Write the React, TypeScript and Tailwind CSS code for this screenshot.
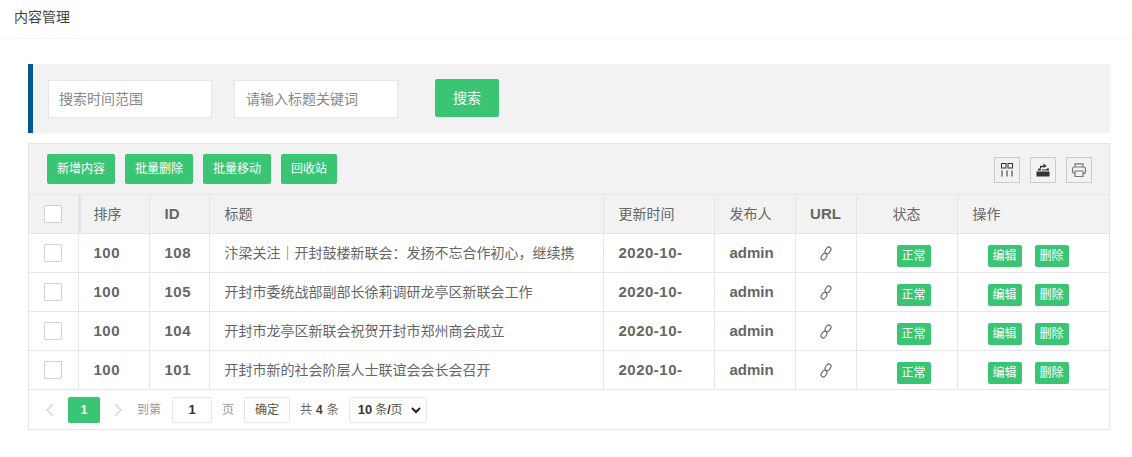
const FONT = '"Liberation Sans", "Noto Sans CJK SC", sans-serif';

const rows = [
  { id: "108", title: "汴梁关注｜开封鼓楼新联会：发扬不忘合作初心，继续携" },
  { id: "105", title: "开封市委统战部副部长徐莉调研龙亭区新联会工作" },
  { id: "104", title: "开封市龙亭区新联会祝贺开封市郑州商会成立" },
  { id: "101", title: "开封市新的社会阶层人士联谊会会长会召开" },
];

function Check() {
  return <span className="block w-[18px] h-[18px] border border-[#d2d2d2] bg-white rounded-[1px]" />;
}

function LinkIcon() {
  return (
    <svg width="12" height="15" viewBox="0 0 12 15" fill="none" stroke="#666" strokeWidth="1.1" className="block mx-auto">
      <rect x="5.700" y="0.800" width="4.600" height="7" rx="2.300" transform="rotate(35 8 4.300)" />
      <rect x="1.700" y="7.200" width="4.600" height="7" rx="2.300" transform="rotate(35 4 10.700)" />
    </svg>
  );
}

function Btn({ children }: { children: string }) {
  return (
    <span className="h-[30px] leading-[30px] px-[10px] bg-[#3ac574] text-white text-[12px] rounded-[2px] block">{children}</span>
  );
}

function Tag({ children }: { children: string }) {
  return (
    <span className="block h-[22px] leading-[22px] w-[34px] text-center bg-[#3ac574] text-white text-[12px] rounded-[2px]">{children}</span>
  );
}

const cellBorder = "border-r border-[#e6e6e6] text-[14px] text-[#666]";
const th = cellBorder + " font-normal text-left px-[15px]";
const td = cellBorder + " px-[15px] whitespace-nowrap overflow-hidden";
const tdBold = cellBorder + " px-[15px] whitespace-nowrap overflow-hidden !text-[15px] font-bold tracking-[0.5px]";

export default function App() {
  return (
    <div className="w-[1132px] h-[457px] bg-white overflow-hidden" style={{ fontFamily: FONT }}>
      <div className="h-[39px] border-b border-[#f6f6f6] pl-[14px] leading-[35px] text-[14px] text-[#444]">内容管理</div>

      <div className="mr-[22px] ml-[28px] mt-[25px]">
        <div className="h-[69px] bg-[#f2f2f2] border-l-[5px] border-[#005a8f] flex items-start pl-[15px] pt-[15px] gap-[22px]">
          <div className="mt-[1px] w-[164px] h-[38px] bg-white border border-[#e6e6e6] pl-[10px] leading-[36px] text-[14px] text-[#888]">搜索时间范围</div>
          <div className="mt-[1px] w-[164px] h-[38px] bg-white border border-[#e6e6e6] pl-[11px] leading-[36px] text-[14px] text-[#888]">请输入标题关键词</div>
          <div className="ml-[15px] w-[64px] h-[38px] bg-[#3ac574] rounded-[2px] text-white text-[14px] leading-[38px] text-center">搜索</div>
        </div>

        <div className="mt-[10px] border border-[#e6e6e6]">
          <div className="h-[50px] bg-[#f2f2f2] flex items-start pt-[10px] pl-[18px] pr-[17px] gap-[10px]">
            <Btn>新增内容</Btn>
            <Btn>批量删除</Btn>
            <Btn>批量移动</Btn>
            <Btn>回收站</Btn>
            <div className="ml-auto flex gap-[10px] pt-[3px]">
              <span className="w-[26px] h-[26px] border border-[#ccc] flex items-center justify-center">
                <svg width="16" height="16" viewBox="0 0 16 16" fill="none" stroke="#333" strokeWidth="1">
                  <rect x="2.500" y="1.500" width="4.500" height="4.500" />
                  <rect x="9" y="1.500" width="4.500" height="4.500" />
                  <path d="M3 8.500v6M8 8.500v6M13 8.500v6" />
                </svg>
              </span>
              <span className="w-[26px] h-[26px] border border-[#ccc] flex items-center justify-center">
                <svg width="16" height="16" viewBox="0 0 16 16" fill="#333">
                  <path d="M1.500 9.500h13V14.500h-13z" />
                  <path d="M2.500 8.500l1-2h2.500v2zM7 8.500v-1h4l1 -1h2v2z" />
                  <path d="M5 6V3.700H8.500V1.500l3.300 2.500L8.500 6V4.900H6.500V6z" />
                </svg>
              </span>
              <span className="w-[26px] h-[26px] border border-[#ccc] flex items-center justify-center">
                <svg width="16" height="16" viewBox="0 0 16 16" fill="none" stroke="#777" strokeWidth="1.200">
                  <path d="M4 5V1.800h8V5" />
                  <rect x="1.500" y="5" width="13" height="6.500" rx="2" />
                  <path d="M4 9h8v5.500H4z" fill="#f2f2f2" />
                </svg>
              </span>
            </div>
          </div>

          <table className="w-full table-fixed border-collapse">
            <colgroup>
              <col className="w-[49px]" />
              <col className="w-[71px]" />
              <col className="w-[60px]" />
              <col className="w-[394px]" />
              <col className="w-[111px]" />
              <col className="w-[81px]" />
              <col className="w-[61px]" />
              <col className="w-[101px]" />
              <col />
            </colgroup>
            <thead>
              <tr className="h-[39px] bg-[#f2f2f2] border-y border-[#e6e6e6]">
                <th className={cellBorder + " font-normal text-left"}><div className="pl-[15px]"><Check /></div></th>
                <th className={th + " shadow-[inset_4px_0_3px_-3px_#d8d8d8]"}>排序</th>
                <th className={cellBorder + " !text-[15px] font-bold text-left px-[15px]"}>ID</th>
                <th className={th}>标题</th>
                <th className={th}>更新时间</th>
                <th className={th}>发布人</th>
                <th className={cellBorder + " !text-[15px] font-bold text-center"}>URL</th>
                <th className={cellBorder + " font-normal text-center"}>状态</th>
                <th className="font-normal text-left px-[15px] text-[14px] text-[#666]">操作</th>
              </tr>
            </thead>
            <tbody>
              {rows.map((r) => (
                <tr key={r.id} className="h-[39px] border-b border-[#e6e6e6]">
                  <td className={cellBorder}><div className="pl-[15px]"><Check /></div></td>
                  <td className={tdBold}>100</td>
                  <td className={tdBold}>{r.id}</td>
                  <td className={td}>{r.title}</td>
                  <td className={tdBold}>2020-10-</td>
                  <td className={tdBold + " !tracking-[0px]"}>admin</td>
                  <td className={cellBorder}><LinkIcon /></td>
                  <td className={cellBorder + " pt-[6px] pl-[40px]"}><Tag>正常</Tag></td>
                  <td className="pt-[6px] pl-[30px]">
                    <span className="flex gap-[13px]">
                      <Tag>编辑</Tag>
                      <Tag>删除</Tag>
                    </span>
                  </td>
                </tr>
              ))}
            </tbody>
          </table>

          <div className="h-[39px] pt-[1px] flex items-center pl-[15px] text-[12px] text-[#999]">
            <svg width="12" height="16" viewBox="0 0 12 16" fill="none" stroke="#d2d2d2" strokeWidth="1.200"><path d="M9 2 3 8l6 6" /></svg>
            <span className="ml-[12px] w-[32px] h-[26px] bg-[#3ac574] rounded-[2px] text-white font-bold text-center leading-[26px]">1</span>
            <svg className="ml-[12px]" width="12" height="16" viewBox="0 0 12 16" fill="none" stroke="#d2d2d2" strokeWidth="1.200"><path d="m3 2 6 6-6 6" /></svg>
            <span className="ml-[13px]">到第</span>
            <span className="ml-[11px] w-[40px] h-[26px] border border-[#e6e6e6] rounded-[2px] text-center leading-[24px] text-[13px] text-[#333] font-bold">1</span>
            <span className="ml-[10px]">页</span>
            <span className="ml-[10px] w-[46px] h-[26px] border border-[#e6e6e6] rounded-[2px] text-center leading-[24px] text-[#555]">确定</span>
            <span className="ml-[10px] text-[#666] flex gap-[4px]"><span>共</span><b className="text-[#444]">4</b><span>条</span></span>
            <span className="ml-[10px] w-[78px] h-[26px] border border-[#e6e6e6] rounded-[2px] flex items-center pl-[8px] text-[#333]">
              <b className="text-[13px]">10</b><span className="ml-[3px] text-[#555]">条</span><b>/</b><span className="text-[#555]">页</span>
              <svg className="ml-[8px]" width="10" height="7" viewBox="0 0 10 7" fill="none" stroke="#222" strokeWidth="2"><path d="m1 1 4 4 4-4" /></svg>
            </span>
          </div>
        </div>
      </div>
    </div>
  );
}
